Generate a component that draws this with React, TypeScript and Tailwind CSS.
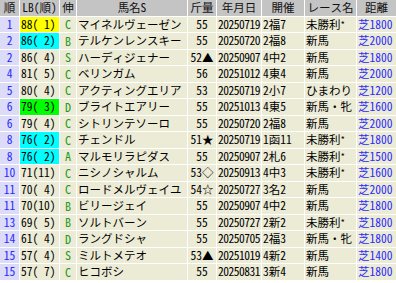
import React from "react";

type Row = {
  rank: string;
  lb: string;
  lbBg?: string;
  nobi: string;
  name: string;
  kin: string;
  date: string;
  kaisai: string;
  race: string;
  dist: string;
};

const rows: Row[] = [
  { rank: "1", lb: "88( 1)", lbBg: "bg-[#ffff00]", nobi: "C", name: "マイネルヴェーゼン", kin: "55", date: "20250719", kaisai: "2福7", race: "未勝利*", dist: "芝1800" },
  { rank: "2", lb: "86( 2)", lbBg: "bg-[#00ffff]", nobi: "B", name: "テルケンレンスキー", kin: "55", date: "20250720", kaisai: "2福8", race: "新馬", dist: "芝2000" },
  { rank: "2", lb: "86( 4)", nobi: "S", name: "ハーディジェナー", kin: "52▲", date: "20250907", kaisai: "4中2", race: "新馬", dist: "芝1800" },
  { rank: "4", lb: "81( 5)", nobi: "C", name: "ベリンガム", kin: "56", date: "20251012", kaisai: "4東4", race: "新馬", dist: "芝2000" },
  { rank: "5", lb: "80( 4)", nobi: "C", name: "アクティングエリア", kin: "53", date: "20250719", kaisai: "2小7", race: "ひまわり", dist: "芝1200" },
  { rank: "6", lb: "79( 3)", lbBg: "bg-[#00ff00]", nobi: "D", name: "ブライトエアリー", kin: "55", date: "20251013", kaisai: "4東5", race: "新馬・牝", dist: "芝1600" },
  { rank: "6", lb: "79( 4)", nobi: "C", name: "シトリンテソーロ", kin: "55", date: "20250720", kaisai: "2福8", race: "新馬", dist: "芝2000" },
  { rank: "8", lb: "76( 2)", lbBg: "bg-[#00ffff]", nobi: "C", name: "チェンドル", kin: "51★", date: "20250719", kaisai: "1函11", race: "未勝利*", dist: "芝1800" },
  { rank: "8", lb: "76( 2)", lbBg: "bg-[#00ffff]", nobi: "A", name: "マルモリラピダス", kin: "55", date: "20250907", kaisai: "2札6", race: "未勝利*", dist: "芝1500" },
  { rank: "10", lb: "71(11)", nobi: "C", name: "ニシノシャルム", kin: "53◇", date: "20250913", kaisai: "4中3", race: "未勝利*", dist: "芝1600" },
  { rank: "11", lb: "70( 4)", nobi: "C", name: "ロードメルヴェイユ", kin: "54☆", date: "20250727", kaisai: "3名2", race: "新馬", dist: "芝2000" },
  { rank: "11", lb: "70(10)", nobi: "B", name: "ビリージェイ", kin: "55", date: "20250907", kaisai: "4中2", race: "新馬", dist: "芝1800" },
  { rank: "13", lb: "69( 5)", nobi: "B", name: "ソルトバーン", kin: "55", date: "20250727", kaisai: "2新2", race: "未勝利*", dist: "芝1800" },
  { rank: "14", lb: "61( 4)", nobi: "D", name: "ラングドシャ", kin: "55", date: "20250705", kaisai: "2福3", race: "新馬・牝", dist: "芝1800" },
  { rank: "15", lb: "57( 4)", nobi: "S", name: "ミルトメテオ", kin: "53▲", date: "20251019", kaisai: "4新2", race: "新馬", dist: "芝1400" },
  { rank: "15", lb: "57( 7)", nobi: "C", name: "ヒコボシ", kin: "55", date: "20250831", kaisai: "3新4", race: "新馬", dist: "芝1800" },
];

const headers = ["順", "LB(順)", "伸", "馬名S", "斤量", "年月日", "開催", "レース名", "距離"];

const cellBase = "flex items-center whitespace-pre overflow-hidden leading-none";
const body = "bg-[#ecebd6]";

function RaceText({ t }: { t: string }) {
  if (t.endsWith("*")) {
    return (
      <span>
        {t.slice(0, -1)}
        <span className="text-[9px] relative -top-[1px]">*</span>
      </span>
    );
  }
  return <span>{t}</span>;
}

export default function App() {
  return (
    <div className="w-[396px] h-[283px] bg-white overflow-hidden font-[family-name:'Noto_Sans_Mono_CJK_JP','Noto_Sans_CJK_JP',sans-serif] text-[11.5px] text-black">
      <div className="grid grid-cols-[19px_39px_16px_110px_28px_44px_42px_51px_39px] auto-rows-[15.5px] gap-px">
        {headers.map((h) => (
          <div key={h} className={`${cellBase} justify-center bg-[#c4c4c4] text-[#111]`}>
            {h}
          </div>
        ))}
        {rows.map((r, i) => (
          <React.Fragment key={i}>
            <div className={`${cellBase} justify-center bg-[#dcdcf8] text-[#2a2aff]`}>{r.rank}</div>
            <div className={`${cellBase} pl-[1px] ${r.lbBg ?? body}`}>{r.lb}</div>
            <div className={`${cellBase} justify-center text-[12px] ${body} text-[#1f9a1f]`}>{r.nobi}</div>
            <div className={`${cellBase} pl-[1px] ${body}`}>{r.name}</div>
            <div className={`${cellBase} justify-center ${body}`}>{r.kin}</div>
            <div className={`${cellBase} pl-[1px] tracking-[-0.5px] ${body}`}>{r.date}</div>
            <div className={`${cellBase} pl-[1px] ${body}`}>{r.kaisai}</div>
            <div className={`${cellBase} pl-[1px] ${body}`}>
              <RaceText t={r.race} />
            </div>
            <div className={`${cellBase} pl-[1px] ${body} text-[#2a2aff]`}>{r.dist}</div>
          </React.Fragment>
        ))}
      </div>
    </div>
  );
}
